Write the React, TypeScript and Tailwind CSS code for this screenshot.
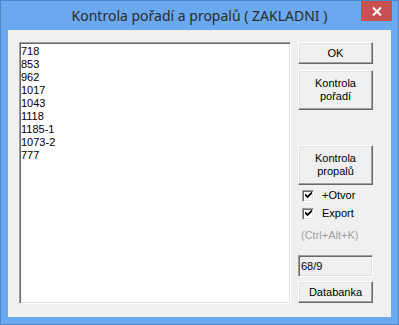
import React from "react";

const raised =
  "border border-t-white border-l-white border-r-[#696969] border-b-[#696969] shadow-[inset_-1px_-1px_0_#a0a0a0,inset_1px_1px_0_#e3e3e3]";
const sunken =
  "border border-t-[#a0a0a0] border-l-[#a0a0a0] border-r-white border-b-white shadow-[inset_1px_1px_0_#696969,inset_-1px_-1px_0_#e3e3e3]";

function Btn({ children, className = "" }: { children: React.ReactNode; className?: string }) {
  return (
    <button
      className={`w-[75px] bg-[#f0f0f0] text-black text-[11px] leading-[13px] flex flex-col items-center justify-center ${raised} ${className}`}
    >
      {children}
    </button>
  );
}

function Check({ label, className = "" }: { label: string; className?: string }) {
  return (
    <label className={`flex items-center h-[13px] pl-[4px] ${className}`}>
      <span className={`w-[12px] h-[12px] bg-white flex items-center justify-center ${sunken}`}>
        <svg width="7" height="7" viewBox="0 0 7 7">
          <path d="M0 2.5 L2.5 5 L7 0.5" stroke="#000" strokeWidth="1.8" fill="none" />
        </svg>
      </span>
      <span className="ml-[8px] text-[11px] text-black">{label}</span>
    </label>
  );
}

const items = ["718", "853", "962", "1017", "1043", "1118", "1185-1", "1073-2", "777"];

export default function App() {
  return (
    <div
      className="w-[399px] h-[325px] bg-[#6aa9f0] border border-[#4f86c6] flex flex-col"
      style={{ fontFamily: '"Liberation Sans", Arial, sans-serif' }}
    >
      {/* Title bar */}
      <div className="h-[29px] flex items-start relative">
        <div
          className="flex-1 text-center text-[14px] leading-[29px] text-[#2b2b2b]"
          style={{ fontFamily: '"Noto Sans", "Open Sans", sans-serif' }}
        >
          Kontrola pořadí a propalů ( ZAKLADNI )
        </div>
        <div className="absolute right-[6px] top-0 w-[31px] h-[20px] bg-[#c75050] flex items-center justify-center">
          <svg width="10" height="9" viewBox="0 0 10 9">
            <path d="M1 0.5 L9 8.5 M9 0.5 L1 8.5" stroke="#fff" strokeWidth="2" />
          </svg>
        </div>
      </div>

      {/* Client area */}
      <div className="mx-[7px] h-[287px] bg-[#f0f0f0] flex pt-[12px] pl-[11px]">
        <div className={`w-[272px] h-[262px] bg-white pl-[1px] pt-[2px] ${sunken}`}>
          {items.map((it) => (
            <div key={it} className="text-[11px] leading-[13px] text-black">
              {it}
            </div>
          ))}
        </div>

        <div className="ml-[7px] flex flex-col">
          <Btn className="h-[22px]">OK</Btn>
          <Btn className="h-[40px] mt-[6px]">
            <span>Kontrola</span>
            <span>pořadí</span>
          </Btn>
          <Btn className="h-[40px] mt-[35px]">
            <span>Kontrola</span>
            <span>propalů</span>
          </Btn>
          <Check label="+Otvor" className="mt-[4px]" />
          <Check label="Export" className="mt-[5px]" />
          <div className="mt-[9px] pl-[3px] text-[11px] leading-[13px] text-[#a0a0a0]">(Ctrl+Alt+K)</div>
          <div className={`mt-[13px] w-[75px] h-[22px] bg-[#f0f0f0] pl-[2px] flex items-center text-[11px] text-black ${sunken}`}>
            68/9
          </div>
          <Btn className="h-[22px] mt-[4px]">Databanka</Btn>
        </div>
      </div>
    </div>
  );
}
